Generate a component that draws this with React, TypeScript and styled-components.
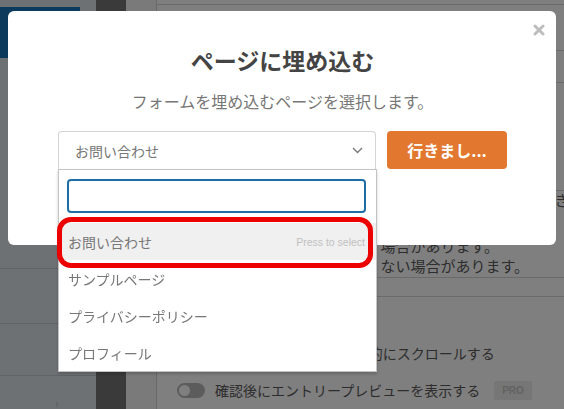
import React from 'react';
import styled, { createGlobalStyle } from 'styled-components';

const GlobalStyle = createGlobalStyle`
  html, body {
    margin: 0;
    padding: 0;
    overflow: hidden;
  }
  body {
    font-family: "Noto Sans CJK JP", "Noto Sans", sans-serif;
  }
  * {
    box-sizing: border-box;
  }
`;

const Page = styled.div`
  display: grid;
  grid-template-columns: 96px 30px 31px 1fr;
  width: 564px;
  height: 409px;
  background: #fff;
`;

const Sidebar = styled.aside`
  display: flex;
  flex-direction: column;
  background: #dde3e9;
  padding-top: 7px;
`;

const Brand = styled.div`
  width: 80px;
  height: 51px;
  background: #1674b8;
`;

const SideRow = styled.div<{ $h: number }>`
  height: ${(p) => p.$h}px;
  border-bottom: 1px solid #c3c8cc;
  flex-shrink: 0;
`;

const SideFoot = styled.div`
  flex: 1;
  display: flex;
  align-items: flex-end;
  padding-left: 55px;
  color: #aab0b5;
  font-size: 12px;
  line-height: 1;
`;

const Strip = styled.div`
  background: #747474;
`;

const Gutter = styled.div`
  background: #f4f4f4;
  border-right: 1px solid #d2d2d2;
`;

const Main = styled.main`
  display: flex;
  flex-direction: column;
  background: #fff;
  color: #5a5a5a;
  overflow: hidden;
`;

const Rule = styled.div<{ $mt: number }>`
  margin-top: ${(p) => p.$mt}px;
  border-top: 1px solid #d4d4d4;
  flex-shrink: 0;
`;

const Desc = styled.div<{ $mt?: number; $pl?: number }>`
  margin-top: ${(p) => p.$mt ?? 0}px;
  padding-left: ${(p) => p.$pl ?? 15}px;
  font-size: 15px;
  line-height: 20px;
  white-space: nowrap;
`;

const ToggleRow = styled.div<{ $mt: number }>`
  display: flex;
  align-items: center;
  gap: 10px;
  margin-top: ${(p) => p.$mt}px;
  padding-left: 20px;
  font-size: 14px;
  height: 20px;
  white-space: nowrap;
`;

const Toggle = styled.span`
  width: 28px;
  height: 15px;
  border-radius: 8px;
  background: #b8b8b8;
  position: relative;
  flex-shrink: 0;

  &::after {
    content: '';
    position: absolute;
    left: 2px;
    top: 2px;
    width: 11px;
    height: 11px;
    border-radius: 50%;
    background: #fff;
  }
`;

const Pro = styled.span`
  margin-left: 4px;
  padding: 4px 8px;
  background: #ededed;
  color: #c4c4c4;
  font-family: "Liberation Sans", Arial, sans-serif;
  font-size: 10px;
  font-weight: 700;
  border-radius: 2px;
  line-height: 11px;
`;

const Overlay = styled.div`
  position: fixed;
  inset: 0;
  background: rgba(0, 0, 0, 0.5);
`;

const Modal = styled.div`
  position: fixed;
  left: 8px;
  top: 11px;
  width: 548px;
  height: 234px;
  background: #fff;
  border-radius: 6px;
  padding: 34px 49px 0 50px;
  display: flex;
  flex-direction: column;
  align-items: center;
`;

const Close = styled.button`
  position: absolute;
  top: 11px;
  right: 9px;
  width: 16px;
  height: 16px;
  border: 0;
  padding: 0;
  background: none;
  display: flex;
  align-items: center;
  justify-content: center;
`;

const Title = styled.h2`
  margin: 0;
  font-size: 23px;
  line-height: 30px;
  font-weight: 700;
  color: #444;
`;

const Subtitle = styled.p`
  margin: 14px 0 0;
  font-size: 16px;
  line-height: 24px;
  color: #777;
`;

const Controls = styled.div`
  display: flex;
  gap: 11px;
  width: 100%;
  margin-top: 18px;
`;

const SelectWrap = styled.div`
  position: relative;
  flex: 1;
`;

const SelectBox = styled.div`
  height: 38px;
  border: 1px solid #d4d4d4;
  border-bottom: 0;
  border-radius: 4px 4px 0 0;
  display: flex;
  align-items: center;
  justify-content: space-between;
  padding: 0 12px 0 16px;
  font-size: 14px;
  color: #777;
`;

const Dropdown = styled.div`
  position: absolute;
  top: 38px;
  left: 0;
  width: 319px;
  background: #fff;
  border: 1px solid #c4c4c4;
  box-shadow: 0 2px 3px rgba(0, 0, 0, 0.2);
  padding-top: 9px;
  z-index: 2;
`;

const Search = styled.input`
  display: block;
  margin: 0 9px 10px 8px;
  width: calc(100% - 18px);
  height: 34px;
  border: 2px solid #1f6ea6;
  border-radius: 4px;
  outline: none;
  font: inherit;
`;

const Option = styled.div<{ $active?: boolean }>`
  position: relative;
  height: 37px;
  display: flex;
  align-items: center;
  justify-content: space-between;
  padding: 0 11px 0 9px;
  font-size: 14px;
  color: #777;
  background: ${(p) => (p.$active ? '#f0f0f0' : 'transparent')};

  ${(p) =>
    p.$active &&
    `
    &::after {
      content: '';
      position: absolute;
      top: -6px;
      bottom: -8px;
      left: -2px;
      right: 3px;
      border: 5px solid #ec0000;
      border-radius: 14px;
    }
  `}
`;

const Hint = styled.span`
  font-family: "Liberation Sans", Arial, sans-serif;
  font-size: 10.5px;
  color: #c0c0c0;
`;

const GoButton = styled.button`
  width: 120px;
  height: 38px;
  border: 0;
  border-radius: 4px;
  background: #e27730;
  color: #fff;
  font-family: "Noto Sans CJK JP", "Noto Sans", sans-serif;
  font-size: 16px;
  font-weight: 700;
`;

const options = ['お問い合わせ', 'サンプルページ', 'プライバシーポリシー', 'プロフィール'];

export default function App() {
  return (
    <>
      <GlobalStyle />
      <Page>
        <Sidebar>
          <Brand />
          <SideRow $h={211} />
          <SideRow $h={55} />
          <SideRow $h={52} />
          <SideFoot>›</SideFoot>
        </Sidebar>
        <Strip />
        <Gutter />
        <Main>
          <Rule $mt={4} />
          <Rule $mt={45} />
          <Rule $mt={31} />
          <Rule $mt={107} />
          <Desc $mt={-1} $pl={23}>この設定を有効にすると、送信の前に入力内容を確認できます。</Desc>
          <Desc $mt={26}>設定によっては表示が崩れる、場合があります。</Desc>
          <Desc>ご利用の環境によっては正しくない場合があります。</Desc>
          <Rule $mt={1} />
          <Rule $mt={18} />
          <ToggleRow $mt={46}>
            <Toggle />
            確認メッセージまで自動的にスクロールする
          </ToggleRow>
          <ToggleRow $mt={17}>
            <Toggle />
            確認後にエントリープレビューを表示する
            <Pro>PRO</Pro>
          </ToggleRow>
        </Main>
      </Page>
      <Overlay />
      <Modal>
        <Close aria-label="閉じる">
          <svg width="12" height="12" viewBox="0 0 12 12">
            <path d="M2 2 L10 10 M10 2 L2 10" stroke="#bdbdbd" strokeWidth="3" strokeLinecap="round" />
          </svg>
        </Close>
        <Title>ページに埋め込む</Title>
        <Subtitle>フォームを埋め込むページを選択します。</Subtitle>
        <Controls>
          <SelectWrap>
            <SelectBox>
              お問い合わせ
              <svg width="11" height="7" viewBox="0 0 11 7">
                <path d="M1 1 L5.5 5.5 L10 1" fill="none" stroke="#777" strokeWidth="1.4" />
              </svg>
            </SelectBox>
            <Dropdown>
              <Search type="text" />
              {options.map((o, i) => (
                <Option key={o} $active={i === 0}>
                  {o}
                  {i === 0 && <Hint>Press to select</Hint>}
                </Option>
              ))}
            </Dropdown>
          </SelectWrap>
          <GoButton>行きまし...</GoButton>
        </Controls>
      </Modal>
    </>
  );
}
